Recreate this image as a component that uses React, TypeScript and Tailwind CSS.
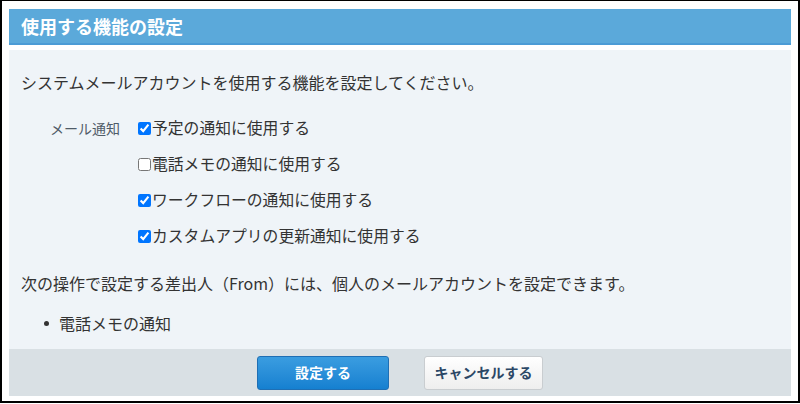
import React from "react"

const options = [
  { label: "予定の通知に使用する", checked: true },
  { label: "電話メモの通知に使用する", checked: false },
  { label: "ワークフローの通知に使用する", checked: true },
  { label: "カスタムアプリの更新通知に使用する", checked: true },
]

export default function App() {
  return (
    <div
      className="w-[800px] h-[404px] bg-white"
      style={{ fontFamily: '"Noto Sans CJK JP", "Noto Sans", sans-serif' }}
    >
      <div className="h-[403px] border-t border-l-2 border-r-2 border-b-2 border-black px-[7px] pt-[8px] flex flex-col">
        {/* Header */}
        <div className="h-[36px] bg-[#5ba9da] border-b-2 border-[#4b9bd5] flex items-center pl-[12px]">
          <h1 className="text-[18px] font-bold text-white leading-none">使用する機能の設定</h1>
        </div>

        {/* Body */}
        <div className="mt-[5px] h-[299px] bg-[#eff4f8] pl-[12px] pt-[20px] text-[#333] text-[16px] leading-[24px]">
          <p>システムメールアカウントを使用する機能を設定してください。</p>

          <div className="flex mt-[22px]">
            <div className="ml-[29px] w-[88px] text-[14px] text-[#4f5b68]">メール通知</div>
            <div className="flex flex-col gap-[12px] text-[15.8px]">
              {options.map((o, i) => (
                <label key={i} className="flex items-center h-[24px]">
                  <input
                    type="checkbox"
                    defaultChecked={o.checked}
                    className="m-0 w-[13px] h-[13px] mr-[1px]"
                  />
                  <span>{o.label}</span>
                </label>
              ))}
            </div>
          </div>

          <p className="mt-[23px]">次の操作で設定する差出人（From）には、個人のメールアカウントを設定できます。</p>

          <div className="flex items-center mt-[16px]">
            <span className="ml-[23px] w-[5px] h-[5px] rounded-full bg-[#333]" />
            <span className="ml-[10px]">電話メモの通知</span>
          </div>
        </div>

        {/* Footer */}
        <div className="h-[47px] bg-[#d9e0e4] flex items-center justify-center gap-[35px]">
          <button className="w-[132px] h-[34px] rounded-[3px] border border-[#1f6fb4] bg-gradient-to-b from-[#3a9de0] to-[#1580d0] text-white text-[14px] font-bold">
            設定する
          </button>
          <button className="w-[119px] h-[34px] rounded-[3px] border border-[#c9cdd0] bg-gradient-to-b from-white to-[#eeeeee] text-[#2b4766] text-[14px] font-bold">
            キャンセルする
          </button>
        </div>
      </div>
    </div>
  )
}
